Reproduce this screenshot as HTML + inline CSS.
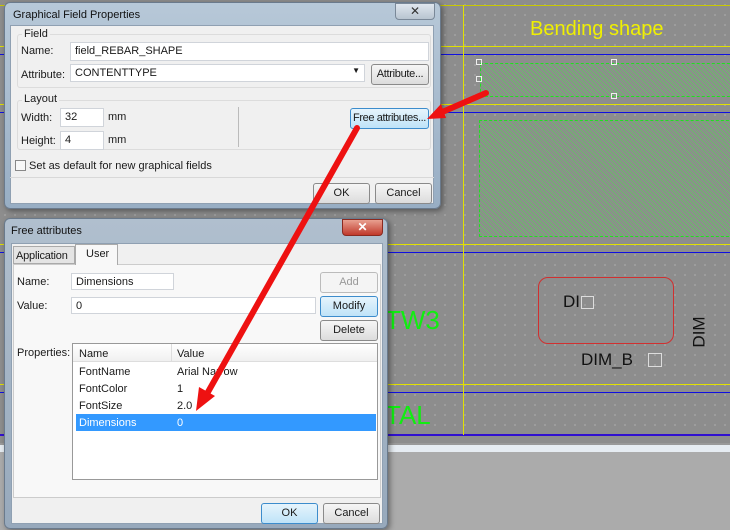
<!DOCTYPE html>
<html><head><meta charset="utf-8"><style>
*{margin:0;padding:0;box-sizing:border-box}
body{width:730px;height:530px;overflow:hidden;position:relative;background:#8d8d8d;font-family:"Liberation Sans",sans-serif;font-size:11px;color:#1a1a1a}
.a{position:absolute;white-space:nowrap}
.hl{position:absolute;left:0;width:730px;height:1px}
.dots{position:absolute;background-image:radial-gradient(circle,#c8c8c8 0.6px,transparent 0.8px);background-size:10px 10px}
.hatch{position:absolute;border:1px dashed #22dd22;background:repeating-linear-gradient(45deg,#8d8d8d 0 2px,#6cb86c 2px 3px)}
.inp{position:absolute;background:#fff;border:1px solid #d0d4da;padding:2px 4px;font-size:11px;height:19px;white-space:nowrap}
.btn{position:absolute;border:1px solid #8a8a8a;border-radius:3px;background:linear-gradient(#f6f6f6,#dcdcdc);text-align:center;font-size:11px;line-height:19px;height:21px;white-space:nowrap;overflow:hidden}
.grp{position:absolute;border:1px solid #dcdcdc;border-radius:3px}
.lbl{position:absolute;font-size:11px;white-space:nowrap}
</style></head><body>
<div class="dots" style="left:0;top:0;width:730px;height:443px"></div>
<div class="hl" style="top:5px;background:#c8c800"></div>
<div class="hl" style="top:46px;background:#e0e000"></div>
<div class="hl" style="top:54px;background:#1010e0"></div>
<div class="hl" style="top:104px;background:#e0e000"></div>
<div class="hl" style="top:112px;background:#1010e0"></div>
<div class="hl" style="top:244px;background:#e0e000"></div>
<div class="hl" style="top:252px;background:#1010e0"></div>
<div class="hl" style="top:384px;background:#e0e000"></div>
<div class="hl" style="top:392px;background:#1010e0"></div>
<div class="hl" style="top:434px;height:2px;background:#3010d0"></div>
<div class="a" style="left:463px;top:5px;width:1px;height:430px;background:#e0e000"></div>
<div class="a" style="left:530px;top:18px;font-size:20px;color:#f0f000">Bending shape</div>
<div class="hatch" style="left:480px;top:63px;width:260px;height:34px"></div>
<div class="a" style="left:476px;top:59px;width:6px;height:6px;border:1px solid #eee"></div>
<div class="a" style="left:476px;top:76px;width:6px;height:6px;border:1px solid #eee"></div>
<div class="a" style="left:611px;top:59px;width:6px;height:6px;border:1px solid #eee"></div>
<div class="a" style="left:611px;top:93px;width:6px;height:6px;border:1px solid #eee"></div>
<div class="hatch" style="left:479px;top:120px;width:260px;height:117px"></div>
<div class="a" style="left:538px;top:277px;width:136px;height:67px;border:1px solid #d03030;border-radius:10px"></div>
<div class="a" style="left:563px;top:292px;font-size:17px;color:#111">DI</div>
<div class="a" style="left:581px;top:296px;width:13px;height:13px;border:1px solid #ddd"></div>
<div class="a" style="left:581px;top:350px;font-size:17px;color:#111">DIM_B</div>
<div class="a" style="left:648px;top:353px;width:14px;height:14px;border:1px solid #ddd"></div>
<div class="a" style="left:684px;top:322px;font-size:17px;color:#111;transform:rotate(-90deg)">DIM</div>
<div class="a" style="left:385px;top:305px;font-size:26px;color:#10ee10">TW3</div>
<div class="a" style="left:385px;top:400px;font-size:26px;color:#10ee10">TAL</div>
<div class="a" style="left:0;top:443px;width:730px;height:2px;background:#999"></div>
<div class="a" style="left:0;top:445px;width:730px;height:7px;background:#e6ecf2"></div>
<div class="a" style="left:0;top:452px;width:730px;height:78px;background:#ababab"></div>

<!-- dialog 1 -->
<div class="a" style="left:4px;top:2px;width:437px;height:207px;border:1px solid #6a7a8c;border-radius:6px;background:linear-gradient(#b7c8d8,#98aec4);box-shadow:2px 2px 6px rgba(0,0,0,.4)"></div>
<div class="a" style="left:13px;top:9px;font-size:11px;color:#111">Graphical Field Properties</div>
<div class="a" style="left:395px;top:3px;width:40px;height:17px;border:1px solid #7a8898;border-radius:0 0 4px 4px;background:linear-gradient(#dfe6ee,#b8c4d0);text-align:center;font-size:12px;line-height:15px;color:#333">✕</div>
<div class="a" style="left:10px;top:25px;width:424px;height:179px;background:#f0f0f0;border:1px solid #8fa0b2"></div>
<div class="grp" style="left:17px;top:34px;width:414px;height:54px"></div>
<div class="lbl" style="left:22px;top:28px;background:#f0f0f0;padding:0 2px">Field</div>
<div class="lbl" style="left:21px;top:45px">Name:</div>
<div class="inp" style="left:70px;top:42px;width:359px">field_REBAR_SHAPE</div>
<div class="lbl" style="left:21px;top:69px">Attribute:</div>
<div class="inp" style="left:70px;top:64px;width:295px;height:18px">CONTENTTYPE<span style="position:absolute;right:4px;top:1px;font-size:8px">▼</span></div>
<div class="btn" style="left:371px;top:64px;width:58px;letter-spacing:-0.3px">Attribute...</div>
<div class="grp" style="left:17px;top:100px;width:414px;height:50px"></div>
<div class="lbl" style="left:22px;top:93px;background:#f0f0f0;padding:0 2px">Layout</div>
<div class="lbl" style="left:21px;top:112px">Width:</div>
<div class="inp" style="left:60px;top:108px;width:44px">32</div>
<div class="lbl" style="left:108px;top:111px">mm</div>
<div class="lbl" style="left:21px;top:135px">Height:</div>
<div class="inp" style="left:60px;top:131px;width:44px">4</div>
<div class="lbl" style="left:108px;top:134px">mm</div>
<div class="a" style="left:238px;top:107px;width:1px;height:40px;background:#bbb"></div>
<div class="btn" style="left:350px;top:108px;width:79px;border-color:#3c8ccc;background:linear-gradient(#e6f4fc,#bfe3f8);letter-spacing:-0.4px">Free attributes...</div>
<div class="a" style="left:15px;top:160px;width:11px;height:11px;border:1px solid #888;background:#f8f8f8"></div>
<div class="lbl" style="left:29px;top:160px">Set as default for new graphical fields</div>
<div class="a" style="left:10px;top:177px;width:424px;height:1px;background:#d8d8d8"></div>
<div class="btn" style="left:313px;top:183px;width:57px">OK</div>
<div class="btn" style="left:375px;top:183px;width:57px">Cancel</div>

<!-- dialog 2 -->
<div class="a" style="left:4px;top:218px;width:384px;height:311px;border:1px solid #6a7a8c;border-radius:6px;background:linear-gradient(#b0bfce,#97a9bc);box-shadow:2px 2px 6px rgba(0,0,0,.4)"></div>
<div class="a" style="left:11px;top:225px;font-size:11px;color:#111">Free attributes</div>
<div class="a" style="left:342px;top:219px;width:41px;height:17px;border:1px solid #8a2a20;border-radius:0 0 4px 4px;background:linear-gradient(#e8a090,#c0392b);text-align:center;font-size:12px;line-height:15px;color:#fff;font-weight:bold">✕</div>
<div class="a" style="left:11px;top:243px;width:372px;height:281px;background:#f0f0f0;border:1px solid #8fa0b2"></div>
<div class="a" style="left:13px;top:264px;width:368px;height:234px;border:1px solid #ccc;background:#f8f8f8"></div>
<div class="a" style="left:13px;top:246px;width:62px;height:18px;border:1px solid #aaa;background:#e4e4e4;font-size:11px;padding:3px 2px;letter-spacing:-0.2px">Application</div>
<div class="a" style="left:75px;top:244px;width:43px;height:21px;border:1px solid #aaa;border-bottom:none;background:#f8f8f8;font-size:11px;padding:3px 10px">User</div>
<div class="lbl" style="left:17px;top:276px">Name:</div>
<div class="inp" style="left:71px;top:273px;width:103px;height:17px">Dimensions</div>
<div class="lbl" style="left:17px;top:300px">Value:</div>
<div class="inp" style="left:71px;top:297px;width:245px;height:17px">0</div>
<div class="btn" style="left:320px;top:272px;width:58px;color:#999;border-color:#bbb;background:#f4f4f4">Add</div>
<div class="btn" style="left:320px;top:296px;width:58px;border-color:#3c8ccc;background:linear-gradient(#e6f4fc,#bfe3f8)">Modify</div>
<div class="btn" style="left:320px;top:320px;width:58px">Delete</div>
<div class="lbl" style="left:17px;top:347px">Properties:</div>
<div class="a" style="left:72px;top:343px;width:306px;height:137px;border:1px solid #999;background:#fff"></div>
<div class="a" style="left:73px;top:344px;width:304px;height:18px;background:linear-gradient(#fff,#f0f0f0);border-bottom:1px solid #ddd"></div>
<div class="a" style="left:171px;top:344px;width:1px;height:18px;background:#ddd"></div>
<div class="lbl" style="left:79px;top:348px">Name</div><div class="lbl" style="left:177px;top:348px">Value</div>
<div class="lbl" style="left:79px;top:366px">FontName</div><div class="lbl" style="left:177px;top:366px">Arial Narrow</div>
<div class="lbl" style="left:79px;top:383px">FontColor</div><div class="lbl" style="left:177px;top:383px">1</div>
<div class="lbl" style="left:79px;top:400px">FontSize</div><div class="lbl" style="left:177px;top:400px">2.0</div>
<div class="a" style="left:76px;top:414px;width:300px;height:17px;background:#3399ff"></div>
<div class="lbl" style="left:79px;top:417px;color:#fff">Dimensions</div><div class="lbl" style="left:177px;top:417px;color:#fff">0</div>
<div class="btn" style="left:261px;top:503px;width:57px;border-color:#3c8ccc;background:linear-gradient(#e6f4fc,#bfe3f8)">OK</div>
<div class="btn" style="left:323px;top:503px;width:57px">Cancel</div>

<svg class="a" style="left:0;top:0" width="730" height="530">
<line x1="486" y1="93" x2="440" y2="113" stroke="#ee1111" stroke-width="6" stroke-linecap="round"/>
<polygon points="427,119 441,104 446,118" fill="#ee1111"/>
<line x1="357" y1="128" x2="208" y2="392" stroke="#ee1111" stroke-width="6" stroke-linecap="round"/>
<polygon points="196,411 199,387 215,396" fill="#ee1111"/>
</svg>
</body></html>
